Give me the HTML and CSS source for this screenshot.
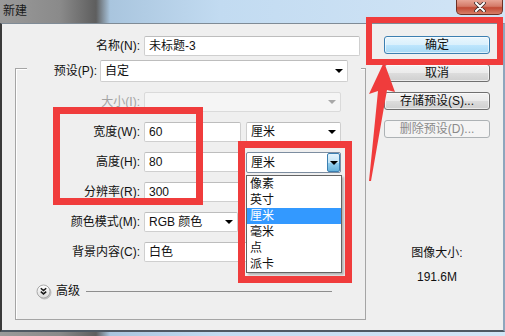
FILE: index.html
```html
<!DOCTYPE html>
<html lang="zh-CN">
<head>
    <meta charset="UTF-8">
    <title>新建</title>
    <link rel="stylesheet" href="styles.css">
</head>
<body>

<div class="window">
    <div class="titlebar">
        <span class="title">新建</span>
        <div class="close-btn">
            <svg width="12" height="10" viewBox="0 0 12 10">
                <path d="M2 1 L10 9 M10 1 L2 9" stroke="#3a2a2a" stroke-width="3.6" stroke-linecap="round"/>
                <path d="M2 1 L10 9 M10 1 L2 9" stroke="#ffffff" stroke-width="2" stroke-linecap="round"/>
            </svg>
        </div>
    </div>

    <div class="dialog">
        <div class="main">
            <div class="name-row">
                <label class="lbl">名称(N):</label>
                <div class="field name-field">未标题-3</div>
            </div>

            <div class="group">
                <div class="preset-row">
                    <label class="lbl preset-lbl">预设(P):</label>
                    <div class="select preset-select"><span>自定</span><i class="caret"></i></div>
                </div>

                <div class="rows">
                    <label class="lbl off">大小(I):</label>
                    <div class="select off"><span></span><i class="caret"></i></div>

                    <label class="lbl">宽度(W):</label>
                    <div class="pair">
                        <div class="field">60</div>
                        <div class="select unit"><span>厘米</span><i class="caret"></i></div>
                    </div>

                    <label class="lbl">高度(H):</label>
                    <div class="pair">
                        <div class="field">80</div>
                        <div class="select unit open">
                            <span>厘米</span>
                            <b class="drop-btn"><i class="caret"></i></b>
                            <ul class="dropdown">
                                <li>像素</li>
                                <li>英寸</li>
                                <li class="on">厘米</li>
                                <li>毫米</li>
                                <li>点</li>
                                <li>派卡</li>
                            </ul>
                        </div>
                    </div>

                    <label class="lbl">分辨率(R):</label>
                    <div class="pair">
                        <div class="field">300</div>
                        <div class="select unit"><span></span><i class="caret"></i></div>
                    </div>

                    <label class="lbl">颜色模式(M):</label>
                    <div class="pair">
                        <div class="select mode"><span>RGB 颜色</span><i class="caret"></i></div>
                        <div class="select unit"><span></span><i class="caret"></i></div>
                    </div>

                    <label class="lbl">背景内容(C):</label>
                    <div class="select"><span>白色</span><i class="caret"></i></div>
                </div>

                <div class="advanced">
                    <svg class="adv-icon" width="15" height="15" viewBox="0 0 15 15">
                        <defs>
                            <linearGradient id="advg" x1="0" y1="0" x2="0" y2="1">
                                <stop offset="0" stop-color="#ffffff"/>
                                <stop offset="1" stop-color="#dcdcdc"/>
                            </linearGradient>
                        </defs>
                        <circle cx="7.5" cy="7.5" r="6.5" fill="url(#advg)" stroke="#a8a8a8"/>
                        <path d="M4.8 4.3 L7.5 6.6 L10.2 4.3 M4.8 7.6 L7.5 9.9 L10.2 7.6" stroke="#1a1a1a" stroke-width="1.5" fill="none"/>
                    </svg>
                    <span class="adv-text">高级</span>
                    <hr class="adv-line">
                </div>
            </div>
        </div>

        <div class="side">
            <div class="btn default">确定</div>
            <div class="btn">取消</div>
            <div class="btn">存储预设(S)...</div>
            <div class="btn off">删除预设(D)...</div>

            <div class="img-size">
                <p>图像大小:</p>
                <p class="size-val">191.6M</p>
            </div>
        </div>
    </div>

    <!-- annotation marks -->
    <div class="mark mark-ok"></div>
    <div class="mark mark-size"></div>
    <div class="mark mark-unit"></div>
    <svg class="mark-arrow" width="505" height="336" viewBox="0 0 505 336">
        <polygon points="384,62 395,92 387,90 371,181 369,181 378,91 369,94" fill="#f03c3c"/>
    </svg>
</div>

</body>
</html>
```

FILE: styles.css
```css
* {
    box-sizing: border-box;
}
body {
    margin: 0;
    font-family: "Liberation Sans", "Noto Sans CJK SC", sans-serif;
    font-size: 12px;
    color: #111;
}
.window {
    position: relative;
    width: 505px;
    height: 336px;
    overflow: hidden;
    background: linear-gradient(90deg, #9a9a9a 0, #8a8a8a 60px, #5e5e5e 96px, #a9c5de 110px, #c2dbf1 220px, #d2e5f6 100%);
}
.titlebar {
    height: 23px;
    display: flex;
    justify-content: space-between;
    align-items: flex-start;
}
.title {
    padding: 3px 0 0 3px;
    line-height: 16px;
    color: #1a1a1a;
}
.close-btn {
    width: 47px;
    height: 15px;
    margin-right: 2px;
    display: flex;
    align-items: center;
    justify-content: center;
    border: 1px solid #6e3024;
    border-top: none;
    border-radius: 0 0 5px 5px;
    background: linear-gradient(#e8a596, #d47a68 45%, #c24a35 55%, #d77d66);
}
.dialog {
    display: flex;
    height: 309px;
    background: #efefef;
    border-top: 1px solid #7f8b96;
    border-left: 2px solid #3a3a3a;
    border-right: 2px solid #8ea6bd;
    border-bottom: 2px solid #4e5863;
}
.main {
    width: 364px;
    padding: 12px 0 0 13px;
}
.lbl {
    text-align: right;
    line-height: 20px;
    white-space: nowrap;
}
.lbl.off {
    color: #a3a3a3;
}
.field, .select {
    height: 20px;
    background: #fff;
    border: 1px solid #cfcfcf;
    border-top-color: #bdbdbd;
    border-radius: 2px;
    padding-left: 4px;
    line-height: 18px;
    white-space: nowrap;
}
.select {
    display: flex;
    justify-content: space-between;
    align-items: center;
    padding-right: 4px;
}
.caret {
    display: block;
    width: 0;
    height: 0;
    border-left: 4px solid transparent;
    border-right: 4px solid transparent;
    border-top: 4px solid #000;
}
.select.off {
    background: #f5f5f5;
    border-color: #dadada;
}
.select.off .caret {
    border-top-color: #a8a8a8;
}
.name-row {
    display: flex;
    gap: 4px;
}
.name-row .lbl {
    width: 125px;
}
.name-field {
    width: 216px;
}
.group {
    width: 351px;
    margin-top: 12px;
    border: 1px solid #a5a5a5;
    box-shadow: inset 1px 1px 0 #fff;
    padding-bottom: 20px;
}
.preset-row {
    display: flex;
    gap: 3px;
    width: 334px;
    margin: -9px 0 0 11px;
    padding-right: 13px;
    background: #efefef;
}
.preset-lbl {
    width: 70px;
    line-height: 22px;
}
.preset-select {
    width: 248px;
    height: 22px;
}
.rows {
    display: grid;
    grid-template-columns: 124px 197px;
    grid-auto-rows: 20px;
    column-gap: 4px;
    row-gap: 10px;
    margin-top: 10px;
}
.pair {
    display: flex;
    gap: 5px;
}
.pair .field {
    width: 97px;
}
.pair .unit {
    width: 95px;
}
.pair .mode {
    width: 94px;
    margin-right: 3px;
}
.select.open {
    position: relative;
    height: 21px;
    border-color: #7d8da0;
    padding-right: 0;
}
.drop-btn {
    display: flex;
    align-items: center;
    justify-content: center;
    width: 13px;
    height: 19px;
    border: 1px solid #3c7fb1;
    border-radius: 2px;
    background: linear-gradient(#e5f4fc, #c4e5f6 50%, #98d1ef 50%, #68b3db);
}
.dropdown {
    position: absolute;
    left: -1px;
    top: 22px;
    width: 96px;
    margin: 0;
    padding: 0;
    list-style: none;
    background: #fff;
    border: 1px solid #646464;
    box-shadow: 2px 2px 2px rgba(0,0,0,0.25);
    z-index: 2;
}
.dropdown li {
    height: 16px;
    line-height: 16px;
    padding-left: 3px;
}
.dropdown li.on {
    background: #3399ff;
    color: #fff;
}
.advanced {
    display: flex;
    align-items: center;
    width: 316px;
    height: 15px;
    margin: 22px 0 0 20px;
}
.adv-icon {
    flex: none;
    filter: drop-shadow(1px 1px 0.5px rgba(0,0,0,0.2));
}
.adv-text {
    flex: none;
    margin-left: 5px;
    line-height: 15px;
}
.adv-line {
    flex: none;
    width: 246px;
    height: 0;
    margin: 0 0 0 6px;
    border: none;
    border-top: 1px solid #8e8e8e;
}
.side {
    width: 137px;
    padding: 12px 0 0 18px;
}
.btn {
    width: 106px;
    height: 18px;
    margin-bottom: 10px;
    text-align: center;
    line-height: 16px;
    border: 1px solid #707070;
    border-radius: 3px;
    background: linear-gradient(#f2f2f2, #ebebeb 50%, #dddddd 50%, #cfcfcf);
    box-shadow: inset 0 0 0 1px rgba(255,255,255,0.6);
}
.btn.default {
    border-color: #3c7fb1;
    background: linear-gradient(#eaf6fd, #d9f0fc 50%, #bee6fd 50%, #a7d9f5);
}
.btn.off {
    border-color: #adb2b5;
    background: #f4f4f4;
    color: #8a8a8a;
    box-shadow: none;
}
.img-size {
    width: 106px;
    margin-top: 107px;
    text-align: center;
}
.img-size p {
    margin: 0;
    line-height: 16px;
}
.img-size .size-val {
    margin-top: 8px;
}
.mark {
    position: absolute;
    border: 7px solid #f03c3c;
    z-index: 5;
}
.mark-ok {
    left: 366px;
    top: 17px;
    width: 137px;
    height: 48px;
    border-width: 6px;
}
.mark-size {
    left: 53px;
    top: 107px;
    width: 150px;
    height: 98px;
}
.mark-unit {
    left: 238px;
    top: 141px;
    width: 114px;
    height: 142px;
}
.mark-arrow {
    position: absolute;
    left: 0;
    top: 0;
    z-index: 4;
}
```
